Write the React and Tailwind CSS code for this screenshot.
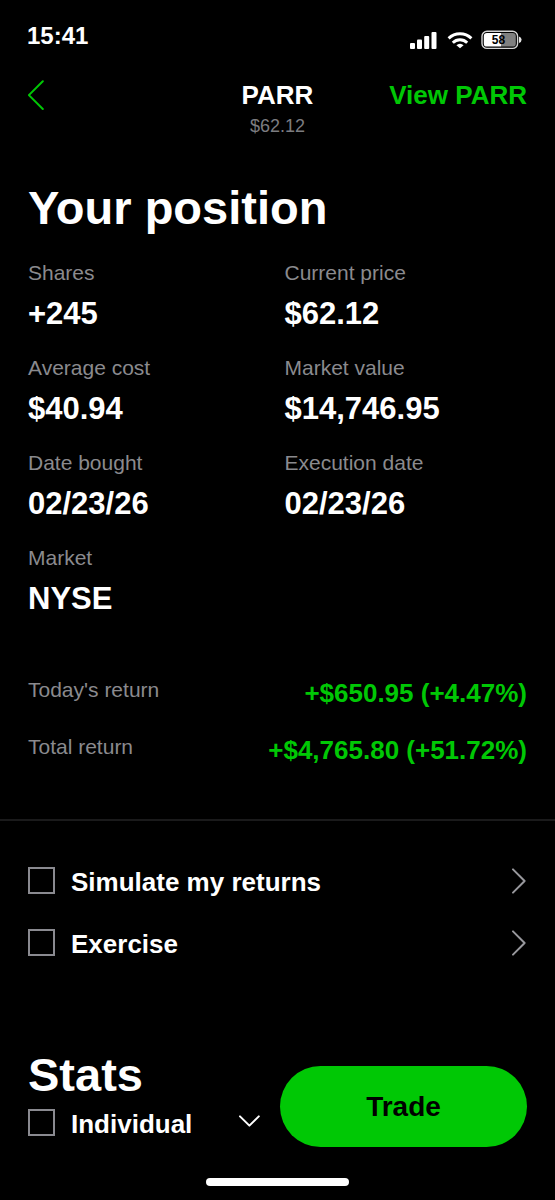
const stats = [
  ['Shares', '+245'],
  ['Current price', '$62.12'],
  ['Average cost', '$40.94'],
  ['Market value', '$14,746.95'],
  ['Date bought', '02/23/26'],
  ['Execution date', '02/23/26'],
  ['Market', 'NYSE'],
];

const returns = [
  ["Today's return", '+$650.95 (+4.47%)'],
  ['Total return', '+$4,765.80 (+51.72%)'],
];

function StatusBar() {
  return (
    <div className="flex items-center justify-between pt-5 pr-[33px] pl-[27px]">
      <span className="text-[24px] leading-8 font-bold">15:41</span>
      <div className="flex items-center pt-2">
        <svg className="h-[17px] w-[27px]" viewBox="0 0 27 17" fill="#fff" aria-hidden="true">
          <rect x="0" y="11" width="5" height="6" rx="1" />
          <rect x="7" y="7.5" width="5" height="9.5" rx="1" />
          <rect x="14.2" y="4" width="5" height="13" rx="1" />
          <rect x="21.5" y="0" width="5" height="17" rx="1" />
        </svg>
        <svg className="ml-[10px] h-[18px] w-[26px]" viewBox="0 0 26 18" fill="none" stroke="#fff" strokeWidth="2.9" aria-hidden="true">
          <path d="M1.6 7.4A16.2 16.2 0 0 1 24.4 7.4" />
          <path d="M5.8 11.7A10.2 10.2 0 0 1 20.2 11.7" />
          <path d="M9.4 14.3A5 5 0 0 1 16.6 14.3L13 17.2Z" fill="#fff" stroke="none" />
        </svg>
        <div className="relative ml-2 flex h-5 w-[41px] items-center">
          <svg className="h-5 w-[41px]" viewBox="0 0 41 20" aria-hidden="true">
            <rect x="1" y="1.2" width="35.6" height="17.2" rx="5" fill="none" stroke="#d4d4d4" strokeWidth="1.4" />
            <path d="M6 3H20V16.6H6A3.2 3.2 0 0 1 2.8 13.4V6.2A3.2 3.2 0 0 1 6 3Z" fill="#fff" />
            <path d="M20 3H31.6A3.2 3.2 0 0 1 34.8 6.2V13.4A3.2 3.2 0 0 1 31.6 16.6H20Z" fill="#808080" />
            <path d="M38 6.6Q40.6 7.4 40.6 9.8T38 13Z" fill="#e5e5e5" />
          </svg>
          <span className="absolute inset-y-0 left-0 w-[35px] text-center text-[12px] leading-5 font-bold text-black">58</span>
        </div>
      </div>
    </div>
  );
}

function CheckRow({ id, label, children }) {
  return (
    <div className="flex h-7 items-center">
      <input
        id={id}
        type="checkbox"
        className="size-[27px] shrink-0 appearance-none border-2 border-[#8a8a90] bg-black checked:bg-[#00c805]"
      />
      <label htmlFor={id} className="flex-1 pt-[3px] pl-4 text-[26px] leading-7 font-bold whitespace-nowrap">
        {label}
      </label>
      {children}
    </div>
  );
}

function OpenButton({ label }) {
  return (
    <button type="button" aria-label={label}>
      <svg className="h-7 w-4" viewBox="0 0 16 28" fill="none" stroke="#98989d" strokeWidth="2" strokeLinecap="round" strokeLinejoin="round" aria-hidden="true">
        <path d="M2 3.4L13.6 15L2 26.6" />
      </svg>
    </button>
  );
}

export default function App() {
  return (
    <div className="min-h-screen bg-black font-['Liberation_Sans',Arial,sans-serif] text-white">
      <StatusBar />

      <header className="grid grid-cols-3 items-start px-7 pt-[27px]">
        <button type="button" aria-label="Back" className="h-8 w-4">
          <svg className="h-8 w-4" viewBox="0 0 16 32" fill="none" stroke="#00c805" strokeWidth="2" strokeLinecap="round" strokeLinejoin="round" aria-hidden="true">
            <path d="M14.8 2.2L0.9 16.1L14.8 30" />
          </svg>
        </button>
        <div className="text-center">
          <h1 className="text-[26px] leading-8 font-bold">PARR</h1>
          <p className="mt-[3px] text-[18px] leading-6 text-[#7c7c80]">$62.12</p>
        </div>
        <a href="#parr" className="text-right text-[26px] leading-8 font-bold whitespace-nowrap text-[#00c805]">View PARR</a>
      </header>

      <main>
        <section className="px-7 pt-[42px]">
          <h2 className="text-[47px] leading-14 font-bold">Your position</h2>
          <dl className="mt-6 grid grid-cols-2 gap-x-[14px] gap-y-[21px]">
            {stats.map(([label, value]) => (
              <div key={label}>
                <dt className="text-[21px] leading-[26px] text-[#8a8a8e]">{label}</dt>
                <dd className="mt-2 text-[31px] leading-10 font-bold">{value}</dd>
              </div>
            ))}
          </dl>
          <dl className="mt-[58px] flex flex-col gap-[25px]">
            {returns.map(([label, value]) => (
              <div key={label} className="flex items-start justify-between">
                <dt className="text-[21px] leading-[26px] text-[#8a8a8e]">{label}</dt>
                <dd className="text-[26px] leading-8 font-bold text-[#00c805]">{value}</dd>
              </div>
            ))}
          </dl>
        </section>

        <section className="mt-[53px] flex flex-col gap-[34px] border-t-2 border-[#1a1a1b] px-7 pt-[45px]">
          <CheckRow id="simulate" label="Simulate my returns">
            <OpenButton label="Open simulated returns" />
          </CheckRow>
          <CheckRow id="exercise" label="Exercise">
            <OpenButton label="Open exercise" />
          </CheckRow>
        </section>

        <section className="mt-[91px] grid grid-cols-[minmax(0,232fr)_minmax(0,247fr)] items-start gap-5 px-7">
          <div>
            <h2 className="text-[47px] leading-14 font-bold">Stats</h2>
            <div className="mt-[5px]">
              <CheckRow id="individual" label="Individual">
                <button type="button" aria-label="Choose account">
                  <svg className="h-6 w-[22px]" viewBox="0 0 22 24" fill="none" stroke="#fff" strokeWidth="2" strokeLinecap="round" strokeLinejoin="round" aria-hidden="true">
                    <path d="M2 6.4L11.4 15.6L20.8 6.4" />
                  </svg>
                </button>
              </CheckRow>
            </div>
          </div>
          <button type="button" className="mt-[19px] h-[81px] rounded-full bg-[#00c805] text-[28px] font-bold text-black">Trade</button>
        </section>
      </main>

      <div className="mx-auto mt-[31px] mb-[14px] h-2 w-[143px] rounded-full bg-white" />
    </div>
  );
}
